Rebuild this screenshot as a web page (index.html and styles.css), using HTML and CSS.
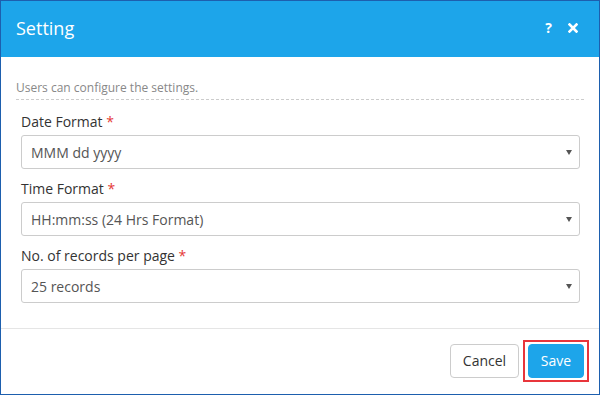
FILE: index.html
```html
<!DOCTYPE html>
<html lang="en">
<head>
    <meta charset="UTF-8">
    <meta name="viewport" content="width=device-width, initial-scale=1.0">
    <title>Setting</title>
    <link rel="stylesheet" href="styles.css">
</head>
<body>
    <div class="dialog">
        <div class="dialog-header">
            <h1>Setting</h1>
            <div class="header-tools">
                <span class="help">?</span>
                <svg class="close" width="10" height="10" viewBox="0 0 10 10">
                    <path d="M1.5 1.5 L8.5 8.5 M8.5 1.5 L1.5 8.5" stroke="#fff" stroke-width="2.6" stroke-linecap="square"/>
                </svg>
            </div>
        </div>

        <div class="dialog-body">
            <p class="description">Users can configure the settings.</p>

            <div class="form">
                <div class="field">
                    <label>Date Format <span class="required">*</span></label>
                    <div class="select">
                        <span>MMM dd yyyy</span>
                        <span class="caret"></span>
                    </div>
                </div>
                <div class="field">
                    <label>Time Format <span class="required">*</span></label>
                    <div class="select">
                        <span>HH:mm:ss (24 Hrs Format)</span>
                        <span class="caret"></span>
                    </div>
                </div>
                <div class="field">
                    <label>No. of records per page <span class="required">*</span></label>
                    <div class="select">
                        <span>25 records</span>
                        <span class="caret"></span>
                    </div>
                </div>
            </div>
        </div>

        <div class="dialog-footer">
            <button class="btn btn-default">Cancel</button>
            <span class="highlight">
                <button class="btn btn-primary">Save</button>
            </span>
        </div>
    </div>
</body>
</html>
```

FILE: styles.css
```css
* {
    margin: 0;
    padding: 0;
    box-sizing: border-box;
}

body {
    font-family: "Open Sans", "Liberation Sans", sans-serif;
    background: white;
    color: #333;
}

.dialog {
    width: 600px;
    height: 395px;
    border: 1px solid #1d5fae;
    background: white;
    display: flex;
    flex-direction: column;
}

.dialog-header {
    background: #1da5ea;
    height: 56px;
    display: flex;
    align-items: center;
    justify-content: space-between;
    padding: 0 15px 2px 15px;
    color: white;
}

.dialog-header h1 {
    font-size: 18px;
    font-weight: 400;
}

.header-tools {
    display: flex;
    align-items: center;
    gap: 16px;
    padding-right: 6px;
}

.help {
    font-size: 14px;
    font-weight: 700;
    line-height: 1;
}

.close {
    display: block;
}

.dialog-body {
    padding: 22px 15px 0 15px;
    flex: 1;
}

.description {
    font-size: 12px;
    line-height: 18px;
    color: #888;
    padding-bottom: 2px;
    border-bottom: 1px dashed #ccc;
}

.form {
    padding: 12px 4px 0 5px;
    display: flex;
    flex-direction: column;
    gap: 10px;
}

.field label {
    display: block;
    font-size: 14px;
    line-height: 20px;
    margin-bottom: 3px;
}

.required {
    color: #e53935;
}

.select {
    height: 34px;
    border: 1px solid #ccc;
    border-radius: 3px;
    display: flex;
    align-items: center;
    justify-content: space-between;
    padding: 0 7px 0 9px;
    font-size: 14px;
    color: #555;
}

.caret {
    width: 0;
    height: 0;
    border-left: 3.5px solid transparent;
    border-right: 3.5px solid transparent;
    border-top: 5px solid #555;
    margin-top: 1px;
}

.dialog-footer {
    border-top: 1px solid #e5e5e5;
    height: 66px;
    display: flex;
    align-items: center;
    justify-content: flex-end;
    gap: 4px;
    padding: 0 10px 2px 15px;
}

.btn {
    font-family: inherit;
    font-size: 14px;
    height: 34px;
    border-radius: 4px;
    cursor: pointer;
}

.btn-default {
    background: white;
    border: 1px solid #ccc;
    color: #333;
    width: 69px;
}

.btn-primary {
    background: #1da5ea;
    border: 1px solid #1da5ea;
    color: white;
    width: 56px;
}

.highlight {
    display: flex;
    padding: 2px 3px;
    border: 2px solid #e8353b;
}
```
